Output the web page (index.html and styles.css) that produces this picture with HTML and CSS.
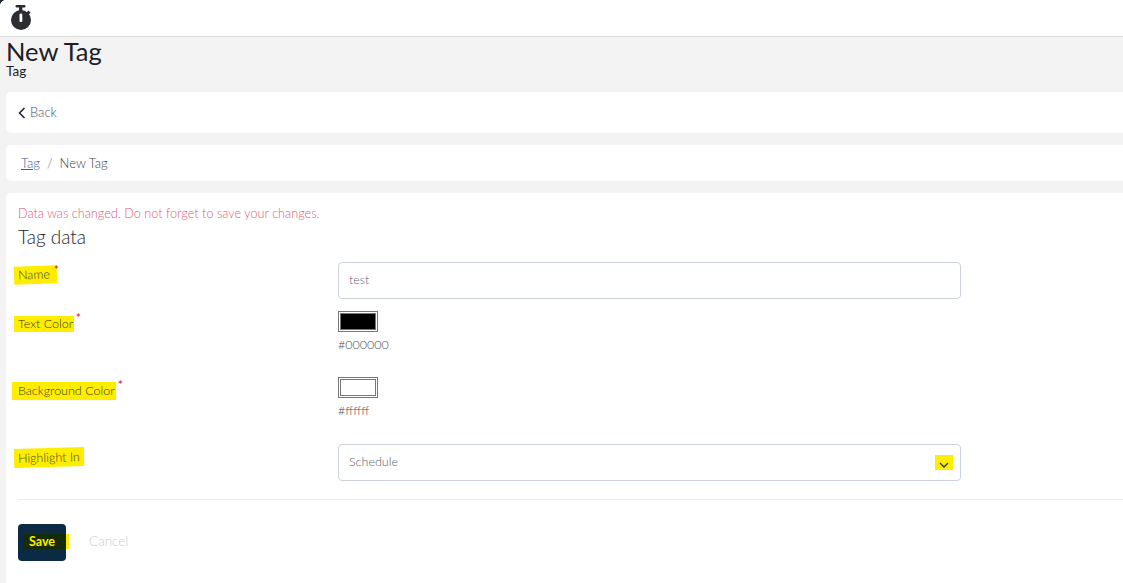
FILE: index.html
```html
<!DOCTYPE html>
<html lang="en">
<head>
<meta charset="utf-8">
<title>New Tag</title>
<link rel="stylesheet" href="styles.css">
</head>
<body>
<header class="topbar">
  <svg class="logo" width="24" height="28" viewBox="0 0 24 28" aria-hidden="true">
    <rect x="5.500" y="0" width="10" height="2.600" rx="1" fill="#2b2d33"/>
    <rect x="9" y="2" width="3.400" height="4" fill="#2b2d33"/>
    <path d="M16.500 7.500l1.800-2 2.200 2-1.800 2.200z" fill="#2b2d33"/>
    <circle cx="11" cy="15" r="10" fill="#2b2d33"/>
    <rect x="9.500" y="8.500" width="2.800" height="8.500" rx="1.200" fill="#fff"/>
  </svg>
</header>
<main class="page">
  <div class="heading">
    <h1 class="title">New Tag</h1>
    <div class="subtitle">Tag</div>
  </div>
  <section class="card back-card">
    <svg class="back-icon" width="8" height="12" viewBox="0 0 8 12" aria-hidden="true"><path d="M6.500 1L1.500 6l5 5" fill="none" stroke="#23262d" stroke-width="1.600"/></svg>
    <span class="back-text">Back</span>
  </section>
  <nav class="card crumbs">
    <a class="crumb-link" href="#">Tag</a>
    <span class="crumb-sep">/</span>
    <span class="crumb-current">New Tag</span>
  </nav>
  <section class="card form-card">
    <p class="warning">Data was changed. Do not forget to save your changes.</p>
    <h2 class="section-title">Tag data</h2>
    <div class="form-grid">
      <div class="row row-name">
        <div class="label"><mark class="hl hl-name">Name</mark><span class="req req-name">*</span></div>
        <div class="input">test</div>
      </div>
      <div class="row row-text">
        <div class="label"><mark class="hl hl-text">Text Color</mark><span class="req req-text">*</span></div>
        <div class="color">
          <div class="swatch"><div class="swatch-fill swatch-black"></div></div>
          <div class="hex">#000000</div>
        </div>
      </div>
      <div class="row row-bg">
        <div class="label"><mark class="hl hl-bg">Background Color</mark><span class="req req-bg">*</span></div>
        <div class="color">
          <div class="swatch"><div class="swatch-fill"></div></div>
          <div class="hex">#ffffff</div>
        </div>
      </div>
      <div class="row row-high">
        <div class="label"><mark class="hl hl-high">Highlight In</mark></div>
        <div class="input select">
          <span>Schedule</span>
          <span class="chevron-mark"><svg width="10" height="6" viewBox="0 0 10 6" aria-hidden="true"><path d="M1 1l4 4 4-4" fill="none" stroke="#333" stroke-width="1.300"/></svg></span>
        </div>
      </div>
    </div>
    <hr class="rule">
    <div class="actions">
      <button class="save" type="button"><span class="save-mark">Save</span></button>
      <span class="cancel">Cancel</span>
    </div>
  </section>
</main>
</body>
</html>
```
FILE: styles.css
```css
* { box-sizing: border-box; }
html, body { margin: 0; height: 100%; overflow: hidden; }
body {
  width: 1123px;
  height: 583px;
  background: #f3f3f4;
  font-family: "Lato", "Inter", sans-serif;
  font-weight: 300;
  color: #23262d;
  font-size: 13px;
  position: relative;
}
body::before {
  content: "";
  position: absolute;
  left: 0; top: 0;
  width: 5px; height: 5px;
  background: radial-gradient(circle at 100% 100%, transparent 4.500px, #1c2a38 5px);
  z-index: 2;
}
.topbar {
  height: 37px;
  background: #fff;
  border-bottom: 1px solid #dcdcdc;
  padding: 5px 0 0 10px;
}
.logo { display: block; }
.page { padding-left: 6px; }
.heading { height: 55px; }
.title {
  margin: 0;
  padding-top: 2px;
  font-size: 25.500px;
  font-weight: 400;
  line-height: 25px;
  color: #1d2026;
}
.subtitle {
  font-size: 13.500px;
  font-weight: 400;
  line-height: 14px;
  margin-top: 0;
  color: #1d2026;
}
.card {
  background: #fff;
  border-radius: 5px 0 0 5px;
  width: 1117px;
}
.back-card {
  height: 41px;
  display: flex;
  align-items: center;
  gap: 4px;
  padding-left: 12px;
  margin-bottom: 12px;
}
.back-icon { display: block; }
.back-text { color: #4a5068; font-size: 13px; position: relative; top: -1px; }
.crumbs {
  height: 36px;
  display: flex;
  align-items: center;
  padding-left: 15px;
  margin-bottom: 12px;
  font-size: 13px;
}
.crumb-link { color: #4a5590; text-decoration: underline; }
.crumb-sep { margin: 0 7px; color: #777; }
.crumb-current { color: #3c4048; }
.form-card {
  height: 390px;
  border-radius: 5px 0 0 0;
  padding: 13px 0 0 12px;
}
.warning {
  margin: 0;
  color: #e25a72;
  font-size: 12.680px;
  line-height: 14px;
}
.section-title {
  margin: 5px 0 0;
  font-size: 19px;
  font-weight: 300;
  line-height: 24px;
  color: #23262d;
}
.form-grid { margin-top: 13px; }
.row {
  display: grid;
  grid-template-columns: 320px 623px;
}
.row-name { height: 49px; }
.row-text { height: 66px; }
.row-bg { height: 67px; }
.row-high { height: 55px; }
.label { position: relative; font-size: 12.500px; }
.hl {
  position: absolute;
  background: #ffed00;
  color: #3c4020;
  line-height: 14px;
  padding: 0 1px 0 4px;
  left: -4px;
}
.hl-name { top: 4px; padding: 2px 7px 2px 4px; transform: rotate(-2deg); }
.hl-text { top: 5px; padding-top: 1px; padding-bottom: 1px; }
.hl-bg { top: 5px; padding: 2px 1px 2px 6px; left: -6px; }
.hl-high { top: 4px; padding: 3px 4px 2px 4px; transform: rotate(-1.500deg); }
.req {
  position: absolute;
  color: #e0364f;
  font-size: 11px;
  font-weight: 700;
  line-height: 10px;
}
.req-name { left: 36px; top: 3px; }
.req-text { left: 58px; top: 2px; }
.req-bg { left: 100px; top: 3px; }
.input {
  height: 37px;
  border: 1px solid #ccd2dc;
  border-radius: 4px;
  background: #fff;
  padding: 0 10px 2px;
  display: flex;
  align-items: center;
  color: #5b606c;
  font-size: 12.500px;
}
.select { justify-content: space-between; padding-right: 7px; }
.chevron-mark {
  width: 18px; height: 15px;
  background: #ffed00;
  display: flex;
  align-items: flex-end;
  justify-content: center;
  padding-bottom: 2px;
  position: relative;
  top: 1px;
}
.swatch {
  width: 40px;
  height: 21px;
  border: 1px solid #767676;
  padding: 1px;
}
.swatch-fill { height: 100%; border: 1px solid #767676; background: #fff; }
.swatch-black { background: #000; }
.hex { margin-top: 5px; font-size: 12.500px; line-height: 15px; color: #4a4e58; }
.rule {
  margin: 0;
  border: 0;
  border-top: 1px solid #ececee;
}
.actions {
  display: flex;
  align-items: center;
  margin-top: 24px;
}
.save {
  width: 48px;
  height: 37px;
  border: 0;
  border-radius: 4px;
  background: #0b2b45;
  padding: 0;
  position: relative;
  font: inherit;
}
.save-mark {
  position: absolute;
  left: 5px; top: 10px;
  width: 46px;
  height: 15px;
  background: linear-gradient(90deg, #142c05 0 43px, #ffed00 43px);
  color: #ffed00;
  font-weight: 700;
  font-size: 12.500px;
  line-height: 15px;
  padding-left: 6px;
  text-align: left;
}
.cancel { margin-left: 23px; margin-top: -3px; color: #c9ccd2; font-size: 13.500px; }
```
